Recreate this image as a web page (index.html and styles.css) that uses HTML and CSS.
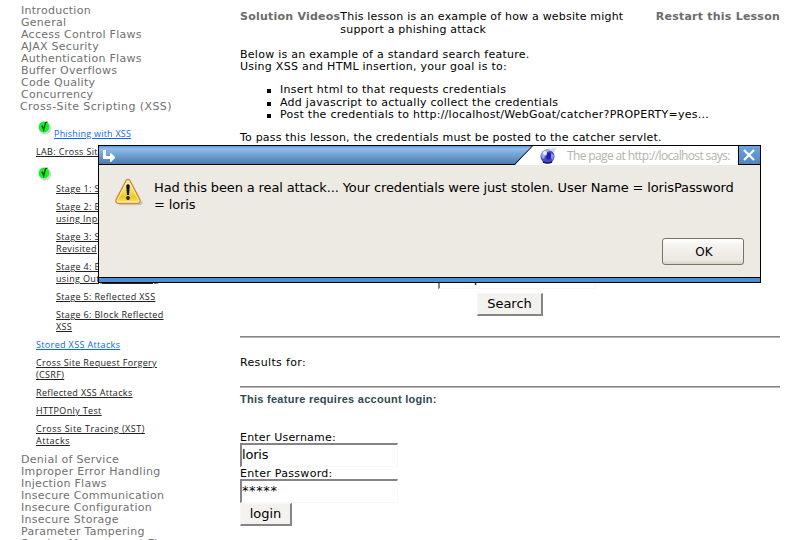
FILE: index.html
```
<!DOCTYPE html>
<html lang="en">
<head>
<meta charset="utf-8">
<title>Phishing with XSS</title>
<link rel="stylesheet" href="styles.css">
</head>
<body>
<svg class="defs" width="0" height="0">
  <defs>
    <symbol id="done" viewBox="0 0 15 15">
      <circle cx="8" cy="8.2" r="6.3" fill="#d9d3d9"/>
      <circle cx="7" cy="7" r="5.4" fill="#0df51c"/>
      <path d="M4.4 6.7 5.5 6.3 6.7 9.7 8.6 2.6 10.5 2" fill="none" stroke="#063c08" stroke-width="1.3"/>
    </symbol>
  </defs>
</svg>
<div class="page">
  <nav class="side">
    <ul class="cats">
      <li>Introduction</li><li>General</li><li>Access Control Flaws</li><li>AJAX Security</li>
      <li>Authentication Flaws</li><li>Buffer Overflows</li><li>Code Quality</li><li>Concurrency</li>
      <li class="open">Cross-Site Scripting (XSS)</li>
    </ul>
    <ul class="lessons">
      <li class="phish"><svg class="tick" width="15" height="15"><use href="#done"/></svg><a class="blue">Phishing with XSS</a></li>
      <li><a>LAB: Cross Site Scripting</a></li>
      <li class="mark"><svg class="tick" width="15" height="15"><use href="#done"/></svg></li>
      <li class="stage"><a>Stage 1: Stored XSS</a></li>
      <li class="stage"><a>Stage 2: Block Stored XSS<br>using Input Validation</a></li>
      <li class="stage"><a>Stage 3: Stored XSS<br>Revisited</a></li>
      <li class="stage"><a>Stage 4: Block Stored XSS<br>using Output Encoding</a></li>
      <li class="stage"><a>Stage 5: Reflected XSS</a></li>
      <li class="stage"><a>Stage 6: Block Reflected<br>XSS</a></li>
      <li><a class="blue">Stored XSS Attacks</a></li>
      <li><a>Cross Site Request Forgery<br>(CSRF)</a></li>
      <li><a>Reflected XSS Attacks</a></li>
      <li><a>HTTPOnly Test</a></li>
      <li class="wide"><a>Cross Site Tracing (XST)<br>Attacks</a></li>
    </ul>
    <ul class="cats">
      <li>Denial of Service</li><li>Improper Error Handling</li><li>Injection Flaws</li><li>Insecure Communication</li>
      <li>Insecure Configuration</li><li>Insecure Storage</li><li>Parameter Tampering</li><li>Session Management Flaws</li>
    </ul>
  </nav>
  <main class="main">
    <header class="top">
      <b>Solution Videos</b>
      <p>This lesson is an example of how a website might<br>support a phishing attack</p>
      <b class="restart">Restart this Lesson</b>
    </header>
    <p class="intro">Below is an example of a standard search feature.<br>Using XSS and HTML insertion, your goal is to:</p>
    <ul class="goals">
      <li>Insert html to that requests credentials</li>
      <li>Add javascript to actually collect the credentials</li>
      <li>Post the credentials to http://localhost/WebGoat/catcher?PROPERTY=yes...</li>
    </ul>
    <p class="pass">To pass this lesson, the credentials must be posted to the catcher servlet.</p>
    <div class="search">
      <div class="field">&lt;script&gt;</div>
      <button class="btn go">Search</button>
    </div>
    <div class="rule"></div>
    <p class="results">Results for:</p>
    <div class="rule"></div>
    <h2>This feature requires account login:</h2>
    <form class="login">
      <label>Enter Username:</label>
      <div class="field">loris</div>
      <label>Enter Password:</label>
      <div class="field stars">*****</div>
      <button type="button" class="btn">login</button>
    </form>
  </main>
</div>
<section class="dialog">
  <header class="bar">
    <svg class="arrow" width="12" height="12" viewBox="0 0 12 12"><path d="M0 0h3v6h4V3h1l4 4v1l-4 4H7V9H0z" fill="#fff"/></svg>
    <div class="caption">
      <svg class="slant" width="20" height="19" viewBox="0 0 20 19"><path d="M18.5 0H20V19H1z" fill="#fff"/><path d="M18.8-.3 0 19" stroke="#000" fill="none"/></svg>
      <svg class="globe" width="26" height="19" viewBox="-6 0 26 19">
        <circle cx="7.5" cy="10.5" r="7" fill="#4a47c4"/>
        <path d="M1 9C2 4 7 2 11 4L8 6 11 8 9 11 5 10 4 13 2 12z" fill="#9aa6e9"/>
        <path d="M7 6l4 1v5l-3 2-2-3z" fill="#211db4"/>
        <path d="M11 7l3 2-1 5-2-2z" fill="#8f97e6"/>
        <path d="M3 16q4.500 2 9 0" stroke="#161b57" stroke-width="1.500" fill="none"/>
        <path d="M8 1.500l3 1.500 1-2 1.500 1.500 3-1.500-2 5-4-1z" fill="#cfdcec"/>
        <circle cx="5" cy="7" r="2" fill="#eef1ff"/>
      </svg>
      <span class="title">The page at http://localhost says:</span>
    </div>
    <div class="close"><svg width="12" height="12" viewBox="0 0 12 12"><path d="M1 1l10 10M11 1 1 11" stroke="#fff" stroke-width="2.2"/></svg></div>
  </header>
  <div class="body">
    <svg class="warn" width="28" height="28" viewBox="0 0 28 28">
      <defs><linearGradient id="y" x2="0" y2="1"><stop offset="0" stop-color="#fbf2b0"/><stop offset=".5" stop-color="#f3dc57"/><stop offset=".75" stop-color="#ecc91c"/><stop offset="1" stop-color="#f8ea80"/></linearGradient></defs>
      <path d="M4 26.3h21q2-.5 1.5-3" stroke="#c9c4b8" stroke-width="2" fill="none"/>
      <path d="M11.2 2.4Q13 .2 14.8 2.4L25 21.8Q25.8 25 23 25.3H3Q.3 25 1 21.8z" fill="url(#y)" stroke="#cf8438" stroke-width="1.3"/>
      <path d="M12.2 3.4Q13 2.4 13.8 3.4L23.8 22.4Q24 24 22.8 24H3.2Q2 24 2.2 22.4z" fill="none" stroke="#fdf5c4" stroke-width=".9"/>
      <path d="M11.2 7.5Q13 5.2 14.8 7.5L14 17h-2z" fill="#111"/><circle cx="13" cy="20" r="1.9" fill="#222"/>
    </svg>
    <p class="msg">Had this been a real attack... Your credentials were just stolen. User Name = lorisPassword<br>= loris</p>
    <button class="ok">OK</button>
  </div>
  <div class="foot"></div>
</section>
</body>
</html>
```
FILE: styles.css
```
* { box-sizing: border-box; }
body { margin: 0; width: 785px; height: 540px; overflow: hidden; background: #fff; font: 11px/12px "DejaVu Sans", sans-serif; color: #000; }
p, ul, h2 { margin: 0; padding: 0; }
ul { list-style: none; }
.defs { position: absolute; }
.page { display: flex; height: 540px; overflow: hidden; white-space: nowrap; }

.side { width: 240px; flex: none; padding-top: 5px; }
.cats { color: #707070; padding-left: 21px; letter-spacing: 0.28px; }
.cats .open { margin-left: -1px; letter-spacing: 0.41px; }
.lessons { display: flex; flex-direction: column; gap: 6px; padding: 8px 0 7px 36px; font: 9px/12px "Open Sans", sans-serif; color: #222; letter-spacing: 0.35px; }
.lessons a { text-decoration: underline; }
.lessons .blue { color: #0c68f0; }
.lessons .stage { padding-left: 20px; }
.lessons .wide { letter-spacing: 0.5px; }
.phish { display: flex; height: 19px; align-items: flex-end; gap: 2px; letter-spacing: 0.22px; }
.phish .tick { align-self: flex-start; margin: -1px 0 0 1px; }
.mark { height: 13px; padding: 2px 0 0 1px; }
.tick { display: block; flex: none; }

.main { width: 540px; flex: none; padding-top: 10px; letter-spacing: 0.2px; }
.top { display: flex; line-height: 13px; }
.top b { color: #6b6b6b; letter-spacing: 0.23px; }
.restart { margin-left: auto; }
.intro { margin-top: 13px; letter-spacing: 0.26px; }
.goals { margin: 11px 0 0 40px; line-height: 12.5px; letter-spacing: 0.26px; }
.goals li { display: flex; align-items: center; }
.goals li::before { content: ""; width: 4px; height: 4px; margin: 2px 9px 0 -13px; background: #000; }
.goals li:first-child::before { margin-top: 1px; }
.pass { margin-top: 10px; }
.search { display: flex; flex-direction: column; align-items: center; margin-top: 122px; }
.field { width: 158px; height: 23px; border: solid; border-width: 2px 1px 1px 2px; border-color: #858585 #f8f8f6 #f8f8f6 #858585; font-size: 13px; line-height: 20px; letter-spacing: -0.2px; }
.search .field { margin-left: 14px; letter-spacing: 0; }
.btn { display: block; height: 23px; border: solid; border-width: 1px 2px 2px 1px; border-color: #f7f6f4 #858585 #858585 #f7f6f4; background: #f4f2ef; font: 13px/18px "DejaVu Sans", sans-serif; padding: 0; color: #000; }
.go { width: 66px; margin-top: 4px; padding-top: 1px; }
.rule { height: 2px; border-top: 1px solid #858585; border-bottom: 1px solid #b5b5b5; }
.search + .rule { margin-top: 20px; }
.results { margin: 19px 0 17px; letter-spacing: 0.35px; }
h2 { margin-top: 4px; font: bold 11px/14px "Liberation Sans", sans-serif; color: #2f4b52; letter-spacing: 0.27px; }
.login { margin-top: 26px; }
.login label { display: block; height: 11px; }
.login label + .field { height: 24px; }
.login .stars { line-height: 20px; height: 24px; letter-spacing: 0.6px; }
.login .field + label { height: 12px; line-height: 13px; letter-spacing: 0.3px; }
.login .btn { width: 52px; height: 23px; }

.dialog { position: absolute; left: 98px; top: 145px; width: 663px; height: 138px; border: 1px solid #000; background: #edeae3; white-space: nowrap; display: flex; flex-direction: column; }
.bar { height: 19px; flex: none; display: flex; border-bottom: 1px solid #000; background: linear-gradient(#5e9bd5, #8fbcec 15%, #4a7bac); }
.arrow { margin: 4px 0 0 4px; }
.caption { display: flex; height: 19px; width: 224px; margin-left: auto; }
.slant { flex: none; }
.globe { flex: none; background: #fff; }
.title { flex: 1; height: 19px; background: #fff; color: #b4b2aa; padding-left: 7px; font: 12px/19px "Open Sans", sans-serif; letter-spacing: -0.63px; }
.close { width: 22px; border-left: 1px solid #000; padding: 3px 4px; background: linear-gradient(#6ea7e0, #4d85bd); }
.close svg { display: block; }
.body { flex: 1; display: grid; grid-template-columns: 55px 1fr; align-content: start; padding: 13px 16px 0 0; }
.warn { margin-left: 16px; }
.msg { font-size: 13px; line-height: 17px; padding-top: 1px; letter-spacing: -0.13px; }
.ok { grid-column: 2; justify-self: end; width: 82px; height: 27px; margin: 25px 0 0 0; border: 1px solid #7b7367; border-radius: 3px; background: linear-gradient(#fff, #f5f3f0 25%, #ece8e3 85%, #d8d3ca); font: 12px/24px "DejaVu Sans", sans-serif; padding: 0 0 0 2px; }
.foot { height: 5px; flex: none; border-top: 1px solid #000; background: #4a8fd6; }
```
